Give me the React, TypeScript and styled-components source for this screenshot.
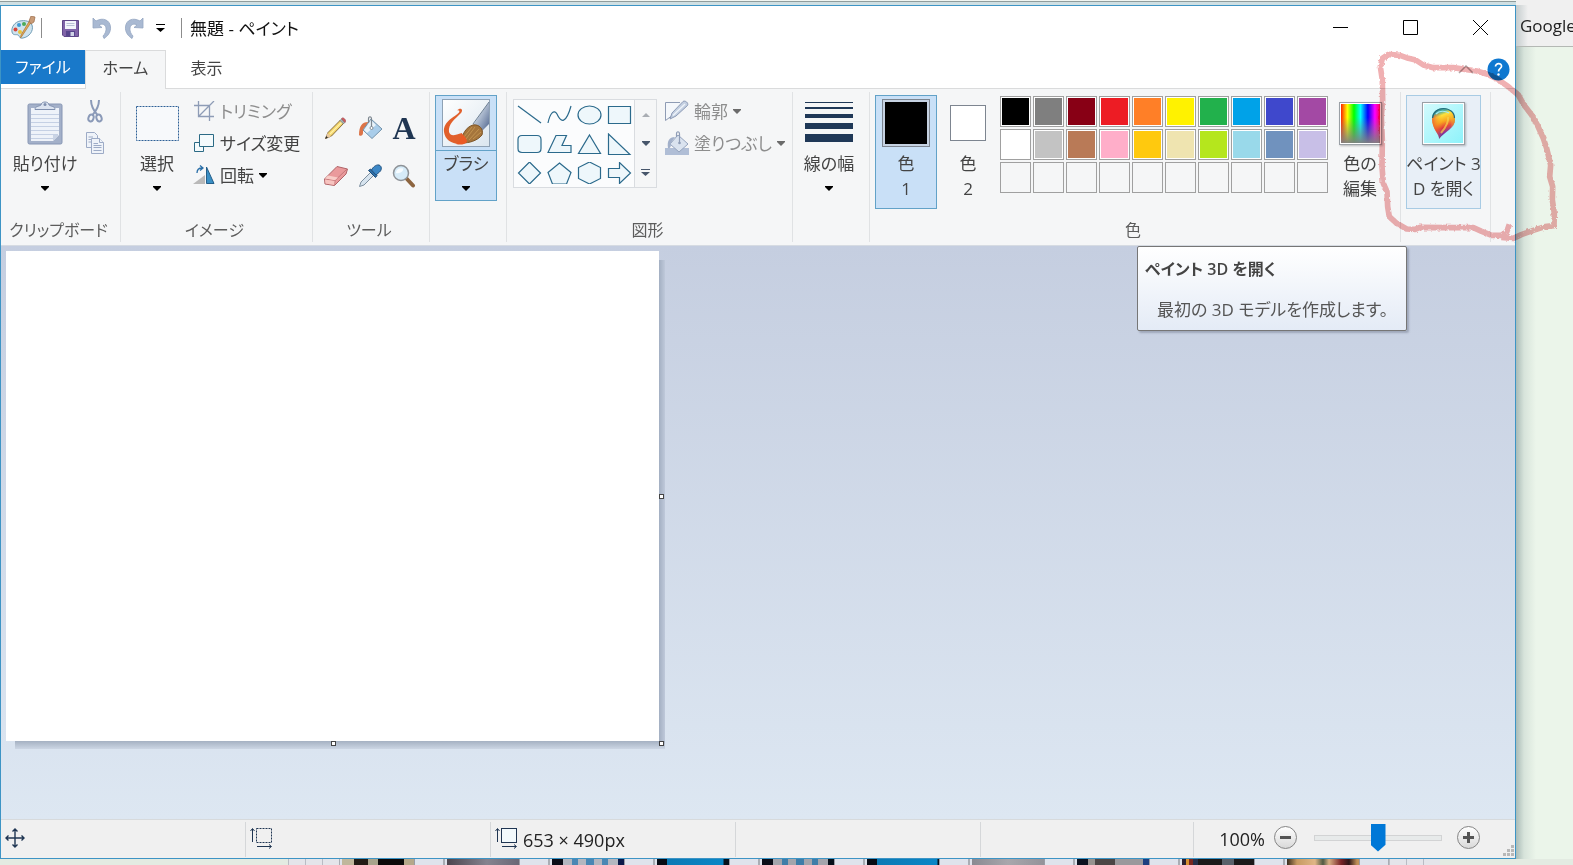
import React from "react";
import styled, { createGlobalStyle, css } from "styled-components";

const GlobalStyle = createGlobalStyle`
  * { box-sizing: border-box; }
  html, body, #root { height: 100%; }
  body {
    margin: 0;
    overflow: hidden;
    font-family: "Open Sans", "Noto Sans CJK JP", sans-serif;
    font-size: 17px;
    line-height: 25px;
    color: #444;
    font-feature-settings: "palt";
  }
  button, input { font: inherit; color: inherit; font-feature-settings: inherit; }
  svg { display: block; flex: none; }
`;

/* ---------- desktop and the browser behind the window ---------- */

const Desktop = styled.div`
  height: 100%;
  display: grid;
  grid-template-columns: minmax(0, 1fr) 57px;
  grid-template-rows: 5px minmax(0, 1fr) 6px;
  background: #ebf5ea;
`;

const TopEdge = styled.div`
  background: linear-gradient(#f1f5f1 0 1px, #8f9c9c 1px 2px, #cfdfe2 2px);
`;

const TopCorner = styled.div`
  background: #f0f0f0;
`;

const BrowserSide = styled.aside`
  background: linear-gradient(90deg, rgba(70, 100, 105, 0.4), rgba(70, 100, 105, 0.12) 8px, rgba(70, 100, 105, 0) 20px), #ebf5ea;
  overflow: hidden;
`;

const BookmarkBar = styled.div`
  height: 42px;
  padding: 8px 0 0 4px;
  background: linear-gradient(90deg, rgba(70, 100, 105, 0.25), rgba(70, 100, 105, 0) 12px), #f0f0f0;
  border-bottom: 1px solid #b4b8b4;
  color: #222;
  white-space: nowrap;
`;

const ThumbStrip = styled.div`
  grid-column: 1 / -1;
  display: flex;
  padding-left: 288px;
  background: #e3ebe2;
  overflow: hidden;
`;

const StripLead = styled.div`
  width: 51px;
  flex: none;
  background: repeating-linear-gradient(90deg, #b9bcc4 0 1px, #e4e5ea 1px 17px);
`;

const Thumb = styled.div<{ $bg: string }>`
  width: 105px;
  flex: none;
  border-left: 1px solid #a9adb4;
  border-right: 1px solid #a9adb4;
  background: #dfe3ec;
  &::before {
    content: "";
    display: block;
    height: 100%;
    width: 72px;
    margin-left: 2px;
    border-right: 1px solid #9a9ca4;
    background: ${(p) => p.$bg};
  }
`;

const thumbs = [
  "linear-gradient(90deg, #c0b79c 0 12px, #221c15 12px 26px, #a8a48c 26px 36px, #0c0a0a 36px 62px, #b5a88a 62px)",
  "linear-gradient(90deg, #4c454e, #85838f 40px, #6a6876)",
  "linear-gradient(90deg, #0b0d18 0 11px, #b3b7c0 11px 20px, #4a87b4 20px 26px, #b3b7c0 26px 34px, #4a87b4 34px 42px, #b3b7c0 42px 50px, #4a87b4 50px 56px, #b3b7c0 56px 66px, #0b1a4a 66px)",
  "linear-gradient(90deg, #070b14 0 10px, #0c79b4 10px, #0a86c6 66px, #05121c 67px)",
  "linear-gradient(90deg, #0b0d18 0 11px, #a3a5ac 11px 20px, #3f7da8 20px 26px, #a3a5ac 26px 34px, #3f7da8 34px 42px, #a3a5ac 42px 50px, #3f7da8 50px 56px, #a3a5ac 56px 66px, #05101a 66px)",
  "linear-gradient(90deg, #070b14 0 10px, #0c79b4 10px, #0a86c6 70px, #05121c 71px)",
  "linear-gradient(90deg, #8a8a92, #a8a7ac 36px, #94939a)",
  "linear-gradient(90deg, #0b1220 0 11px, #96938f 11px 18px, #4b4645 18px 38px, #9a999c 38px 66px, #1c3f80 66px)",
  "linear-gradient(90deg, #2c2030 0 4px, #d89030 4px 7px, #7a2720 7px 11px, #26304a 11px 16px, #1b1a1a 16px 40px, #59616a 40px 52px, #1b1a1a 52px)",
  "linear-gradient(90deg, #3a2c1e, #c79a62 10px, #e0b686 28px, #4f5a44 36px, #d7b184 42px, #7a2326 54px, #2c1518 62px, #c09058 70px)",
];

/* ---------- window frame ---------- */

const Window = styled.main`
  display: flex;
  flex-direction: column;
  min-width: 0;
  background: #fff;
  border: 1px solid #3d94c5;
`;

const TitleBar = styled.header`
  display: flex;
  align-items: center;
  height: 44px;
  flex: none;
  padding-left: 10px;
`;

const QuickAccess = styled.div`
  display: flex;
  align-items: center;
`;

const QuickButton = styled.button<{ $w: number }>`
  width: ${(p) => p.$w}px;
  height: 28px;
  display: grid;
  place-items: center;
  padding: 0;
  border: 0;
  background: none;
`;

const BarDivider = styled.span<{ $left: number; $right: number }>`
  width: 1px;
  height: 20px;
  margin: 0 ${(p) => p.$right}px 0 ${(p) => p.$left}px;
  background: #8c8c8c;
`;

const WindowTitle = styled.h1`
  flex: 1;
  margin: 0;
  font-size: 17px;
  font-weight: 400;
  color: #111;
`;

const CaptionButton = styled.button`
  width: 70px;
  height: 44px;
  padding: 0 0 2px;
  border: 0;
  background: none;
  display: grid;
  place-items: center;
`;

const TabBar = styled.nav`
  display: flex;
  align-items: flex-start;
  height: 39px;
  flex: none;
  border-bottom: 1px solid #dadbdc;
  font-size: 16px;
`;

const FileTab = styled.button`
  width: 84px;
  height: 34px;
  padding: 0;
  border: 0;
  background: #1979ca;
  color: #fff;
`;

const Tab = styled.button<{ $active?: boolean }>`
  width: 81px;
  height: 39px;
  padding: 0 0 3px;
  border: 1px solid transparent;
  border-bottom: 0;
  background: none;
  ${(p) =>
    p.$active &&
    css`
      background: #f5f6f7;
      border-color: #dadbdc;
    `}
`;

const TabTools = styled.div`
  display: flex;
  align-items: center;
  gap: 13px;
  height: 38px;
  margin-left: auto;
  padding-right: 5px;
`;

const PlainButton = styled.button`
  padding: 0;
  border: 0;
  background: none;
`;

/* ---------- ribbon ---------- */

const Ribbon = styled.section`
  display: flex;
  flex: none;
  height: 157px;
  padding: 3px 0;
  background: #f5f6f7;
  border-bottom: 1px solid #d6dbe2;
`;

const Group = styled.section<{ $w: number }>`
  width: ${(p) => p.$w}px;
  flex: none;
  display: flex;
  flex-direction: column;
  justify-content: space-between;
  padding-top: 3px;
  border-right: 1px solid #e0e2e4;
`;

const GroupBody = styled.div<{ $pad?: number; $gap?: number }>`
  display: flex;
  align-items: flex-start;
  gap: ${(p) => p.$gap ?? 0}px;
  padding-left: ${(p) => p.$pad ?? 5}px;
`;

const GroupLabel = styled.h2`
  margin: 0;
  padding-right: 4px;
  font-size: 16px;
  font-weight: 400;
  line-height: 24px;
  text-align: center;
  color: #5c5c5c;
`;

const BigButton = styled.button<{ $tone?: "on" | "hover"; $w?: number; $short?: boolean }>`
  width: ${(p) => p.$w ?? 62}px;
  height: ${(p) => (p.$short ? 106 : 114)}px;
  display: flex;
  flex-direction: column;
  align-items: center;
  padding: 3px 0 0;
  border: 1px solid transparent;
  background: none;
  white-space: nowrap;
  ${(p) => p.$tone === "on" && css`background: #c9e0f7; border-color: #62a2c8;`}
  ${(p) => p.$tone === "hover" && css`background: #e8eff7; border-color: #a8cbe4;`}
`;

const BigIcon = styled.span<{ $rule?: boolean }>`
  align-self: stretch;
  height: 52px;
  padding-bottom: ${(p) => (p.$rule ? 3 : 4)}px;
  display: grid;
  place-items: center;
  border-bottom: ${(p) => (p.$rule ? "1px solid #62a2c8" : "0")};
`;

const Line = styled.span`
  height: 25px;
  display: flex;
  align-items: center;
`;

const SmallColumn = styled.div`
  display: flex;
  flex-direction: column;
`;

const SmallButton = styled.button<{ $off?: boolean }>`
  display: flex;
  align-items: center;
  gap: 5px;
  height: 32px;
  padding: 0;
  border: 0;
  background: none;
  white-space: nowrap;
  color: ${(p) => (p.$off ? "#8d8d8d" : "#444")};
`;

const ToolGrid = styled.div`
  display: grid;
  grid-template-columns: repeat(3, 34px);
  grid-auto-rows: 48px;
  padding-top: 9px;
`;

const ToolButton = styled.button`
  display: grid;
  place-items: center;
  padding: 0;
  border: 0;
  background: none;
`;

const LetterA = styled.span`
  font: bold 32px/34px "Liberation Serif", serif;
  color: #1f3552;
`;

const Gallery = styled.div`
  display: flex;
  margin-top: 4px;
  margin-right: 8px;
  border: 1px solid #d9dce0;
  background: #fbfcfd;
`;

const ShapeGrid = styled.div`
  display: grid;
  grid-template-columns: repeat(4, 30px);
  grid-auto-rows: 29px;
`;

const GalleryScroll = styled.div`
  display: grid;
  grid-template-rows: repeat(3, 29px);
  width: 22px;
  border-left: 1px solid #d9dce0;
  background: #f5f6f7;
`;

const Palette = styled.div`
  display: grid;
  grid-template-columns: repeat(10, 31px);
  gap: 2px;
  margin: 1px 1px 0;
`;

const Swatch = styled.button<{ $c?: string }>`
  height: 31px;
  padding: 1px;
  border: 1px solid #a0a0a0;
  background: ${(p) => (p.$c ? `linear-gradient(${p.$c}, ${p.$c}) content-box, #fff` : "none")};
`;

const ColorChip = styled.span<{ $size: number; $c: string; $mat: string }>`
  width: ${(p) => p.$size}px;
  height: ${(p) => p.$size}px;
  padding: 2px;
  border: 1px solid #7d8590;
  background: ${(p) => `linear-gradient(${p.$c}, ${p.$c}) content-box, ${p.$mat}`};
`;

const FramedChip = styled.span<{ $bg: string }>`
  width: 43px;
  height: 43px;
  display: grid;
  place-items: center;
  border: 1px solid #9aa0a6;
  box-shadow: inset 0 0 0 1px #fff, 1px 1px 2px rgba(0, 0, 0, 0.25);
  background: ${(p) => p.$bg};
`;

/* ---------- work area ---------- */

const Workspace = styled.section`
  position: relative;
  flex: 1;
  min-height: 0;
  padding: 5px;
  background: linear-gradient(#c5cee0, #dde7f2);
  overflow: hidden;
`;

const Paper = styled.div`
  position: relative;
  width: 653px;
  height: 490px;
  background: #fff;
  &::before, &::after {
    content: "";
    position: absolute;
  }
  &::before {
    left: 9px;
    right: -6px;
    top: 100%;
    height: 8px;
    background: linear-gradient(#a5b1c2, #ccd6e4);
  }
  &::after {
    left: 100%;
    top: 9px;
    bottom: 0;
    width: 6px;
    background: linear-gradient(90deg, #a3afc2, #bfc9da);
  }
`;

const Handle = styled.i<{ $x: string; $y: string }>`
  position: absolute;
  z-index: 1;
  left: ${(p) => p.$x};
  top: ${(p) => p.$y};
  width: 5px;
  height: 5px;
  border: 1px solid #444;
  background: #fff;
`;

const Tooltip = styled.div`
  position: absolute;
  top: 0;
  right: 108px;
  width: 270px;
  height: 85px;
  padding: 10px 7px;
  border: 1px solid #767676;
  border-radius: 2px;
  background: linear-gradient(#fff, #e4ebf6);
  box-shadow: 2px 2px 2px rgba(80, 90, 110, 0.35);
  white-space: nowrap;
  color: #555;
`;

const TipTitle = styled.strong`
  display: block;
  font-size: 16px;
  font-weight: 600;
  color: #444;
  margin-bottom: 15px;
`;

const TipText = styled.p`
  margin: 0;
  padding-left: 12px;
`;

/* ---------- status bar ---------- */

const StatusBar = styled.footer`
  display: flex;
  flex: none;
  height: 39px;
  padding: 2px 0 1px;
  border-top: 1px solid #d7dadc;
  background: #f0f0f0;
  color: #222;
  font-size: 18px;
`;

const StatusCell = styled.div<{ $w?: number }>`
  width: ${(p) => p.$w ?? 245}px;
  display: flex;
  align-items: center;
  gap: 5px;
  padding: 0 0 3px 4px;
  border-right: 1px solid #d5d7d9;
`;

const StatusText = styled.span`
  padding-top: 4px;
`;

const ZoomArea = styled.div`
  flex: 1;
  display: flex;
  align-items: center;
  justify-content: flex-end;
`;

const ZoomControls = styled.div`
  display: flex;
  align-items: center;
  padding-bottom: 4px;
`;

const ZoomValue = styled.output`
  margin-right: 9px;
  padding-top: 4px;
`;

const RoundButton = styled.button`
  width: 23px;
  height: 23px;
  display: grid;
  place-items: center;
  padding: 0;
  border: 1px solid #858585;
  border-radius: 50%;
  background: linear-gradient(#fff, #d9d9d9);
`;

const ZoomSlider = styled.input`
  width: 128px;
  height: 28px;
  margin: 0 15px 0 17px;
  appearance: none;
  background: none;
  &::-webkit-slider-runnable-track {
    height: 6px;
    border: 1px solid #d2d3d4;
    background: #e7eaea;
  }
  &::-webkit-slider-thumb {
    appearance: none;
    width: 15px;
    height: 28px;
    margin-top: -12px;
    background: #0078d7;
    clip-path: polygon(0 0, 100% 0, 100% 76%, 50% 100%, 0 76%);
  }
`;

const Grip = styled.span`
  align-self: flex-end;
  margin: 0 1px 1px 23px;
`;

const Scribble = styled.svg`
  position: absolute;
  top: 0;
  right: 0;
  pointer-events: none;
  mix-blend-mode: multiply;
`;

/* ---------- drawings ---------- */

const Arrow = ({ c = "#000" }: { c?: string }) => (
  <svg width="8" height="5" viewBox="0 0 8 5" aria-hidden="true">
    <path d="M0 0H8V1L4 5L0 1Z" fill={c} />
  </svg>
);

const AppIcon = () => (
  <svg width="25" height="24" viewBox="0 0 25 24">
    <path d="M9 5C4 6 0 11 1 16C2 20 5 18 7 19C9 20 8 23 12 22C18 21 23 15 21 9C19 5 14 4 9 5Z" fill="#cfe3ee" stroke="#6f9cb5" />
    <circle cx="4.500" cy="13.500" r="2" fill="#d9453a" />
    <circle cx="8" cy="9" r="2" fill="#3f9bd6" />
    <circle cx="13" cy="8" r="2" fill="#4cab57" />
    <circle cx="9" cy="16" r="2" fill="#e8c33c" />
    <path d="M21 5L11 20L9.500 22L10 19L19 4Z" fill="#e3a85a" stroke="#a8742f" strokeWidth=".7" />
    <path d="M18 5L20 0L24 1L23 6L20 8Z" fill="#c99c78" stroke="#9a6b49" strokeWidth=".7" />
  </svg>
);

const SaveIcon = () => (
  <svg width="17" height="17" viewBox="0 0 17 17">
    <path d="M.5.5H16.500V16.500H2L.5 15Z" fill="#8064a8" stroke="#604888" />
    <path d="M3 1H14V9H3Z" fill="#f3f5fa" />
    <path d="M4.500 3.500H12.500M4.500 5.500H12.500" stroke="#b8c0d4" />
    <path d="M4 11H13V16.500H4Z" fill="#58468c" />
    <path d="M8.500 12H12V16H8.500Z" fill="#cfd3e6" />
  </svg>
);

const UndoIcon = ({ flip = false }: { flip?: boolean }) => (
  <svg width="20" height="22" viewBox="0 0 20 22">
    <g transform={flip ? "translate(20 0) scale(-1 1)" : undefined}>
      <path d="M1 1L4 4C11 0 18 3 18.500 10C19 15 16 19 12 21.500L11 19C15 15 15 9 11.500 7.500C10 7 8.500 7 7 8L10 10.500L1 11Z" fill="#a9b9d2" stroke="#94a6c2" strokeWidth=".8" />
    </g>
  </svg>
);

const PasteIcon = () => (
  <svg width="36" height="44" viewBox="0 0 36 44">
    <rect x="1" y="3" width="34" height="40" rx="1.500" fill="#a3b0c9" stroke="#8796b4" />
    <path d="M4 7H32V34L26 40H4Z" fill="#eef2f9" />
    <path d="M4 13.500H32M4 17.500H32M4 21.500H32M4 25.500H32M4 29.500H32M4 33.500H31M4 37.500H28" stroke="#c5d0e4" />
    <path d="M32 34L26 40V34Z" fill="#c9d3e5" />
    <path d="M8 8.500C8 5 12 5.500 14 4C14 0 22 0 22 4C24 5.500 28 5 28 8.500Z" fill="#dbe3f0" stroke="#7f8fae" />
    <circle cx="18" cy="3.500" r="1.500" fill="#7f8fae" />
  </svg>
);

const CutIcon = () => (
  <svg width="22" height="24" viewBox="0 0 22 24" fill="none" stroke="#8b9ab8">
    <path d="M7 1C7 6 9 11 13.500 16M15 1C15 6 13 11 8.500 16" strokeWidth="2" />
    <ellipse cx="7" cy="19" rx="2.500" ry="3.500" strokeWidth="2" transform="rotate(20 7 19)" />
    <ellipse cx="15" cy="19" rx="2.500" ry="3.500" strokeWidth="2" transform="rotate(-20 15 19)" />
  </svg>
);

const CopyIcon = () => (
  <svg width="22" height="22" viewBox="0 0 22 22" fill="#eff3f9" stroke="#9dabc6">
    <path d="M2.500.5H10.500L13.500 3.500V15.500H2.500Z" />
    <path d="M4.500 5H9M4.500 7.500H9M4.500 10H9" />
    <path d="M7.500 6.500H15.500L19.500 10.500V21.500H7.500Z" />
    <path d="M15.500 6.500V10.500H19.500M9.500 11.500H14M9.500 13.500H17.500M9.500 15.500H17.500M9.500 18.500H17.500" />
  </svg>
);

const SelectIcon = () => (
  <svg width="43" height="35" viewBox="0 0 43 35">
    <rect x=".5" y=".5" width="42" height="34" fill="#f7f9fb" stroke="#2e6096" strokeDasharray="2 1" />
  </svg>
);

const CropIcon = () => (
  <svg width="22" height="20" viewBox="0 0 22 20" fill="none" stroke="#8e9cb6">
    <path d="M5.500 0V15.500H21M1 4.500H16.500V20M6 15L21 0" strokeWidth="1.300" />
  </svg>
);

const ResizeIcon = () => (
  <svg width="22" height="20" viewBox="0 0 22 20" fill="#f4fafc" stroke="#2b6a85">
    <path d="M1.500 9.500H10.500V18.500H1.500Z" />
    <path d="M6.500 1.500H20.500V13.500H6.500Z" />
  </svg>
);

const RotateIcon = () => (
  <svg width="22" height="20" viewBox="0 0 22 20">
    <path d="M0 19L12 10V19Z" fill="#b9b9b9" />
    <path d="M13.500 2V18.500H21Z" fill="#3a8fc4" stroke="#235e8a" />
    <path d="M4 8C4 4 6 3 9 3M7 .5L10 3L7 5.500" fill="none" stroke="#2a6fa8" strokeWidth="1.300" />
  </svg>
);

const PencilIcon = () => (
  <svg width="24" height="24" viewBox="0 0 24 24">
    <path d="M1.500 22.500L4 16.500L16.500 4L19.500 7.500L7.500 20Z" fill="#f3d56b" stroke="#7a6034" strokeWidth=".9" />
    <path d="M6 18L18 6" stroke="#fff1a8" strokeWidth="1.300" />
    <path d="M16 4.500L17.500 3L20.500 6.500L19.500 8Z" fill="#a9b6b9" stroke="#6b6f6f" strokeWidth=".6" />
    <path d="M17.500 2.500C19 .5 23 4 21 6.500Z" fill="#d9575c" stroke="#8c3d3f" strokeWidth=".6" />
    <path d="M1.500 22.500L3.500 17L7 20.500Z" fill="#e9c9a0" />
    <path d="M1.200 22.800L2.300 20L4 21.700Z" fill="#2c2a28" />
  </svg>
);

const BucketIcon = () => (
  <svg width="25" height="24" viewBox="0 0 25 24">
    <path d="M10 6C4 6 1 10 1 19C3 21 5 19 5 17C5 13 6 11 9 11Z" fill="#dc7448" />
    <path d="M13 3L24 13L14 22.500L5 14Z" fill="#a9cdea" stroke="#7393ab" />
    <path d="M13 4L18 9L9 17L6 14Z" fill="#e9f3fa" />
    <path d="M13.500 12V3C13.500 0 10.500 0 10.500 3V7" fill="none" stroke="#7d8790" strokeWidth="1.200" />
    <circle cx="13.500" cy="12" r="1.500" fill="#fff" stroke="#6e7880" strokeWidth=".8" />
  </svg>
);

const EraserIcon = () => (
  <svg width="26" height="22" viewBox="0 0 26 22">
    <path d="M1.500 14L14 1.500L24.500 4L23 9L11.500 20.500L2 19Z" fill="#ea9a9c" stroke="#b06468" />
    <path d="M2 14L12 15.500L24 4M12 15.500L11.500 20" fill="none" stroke="#c4777a" />
    <path d="M2 14.500L11.500 16L11.200 20L2.500 18.500Z" fill="#f7c4c0" />
    <path d="M2 13.500L5 10.500L15 12.500L12 15.200Z" fill="#f8cdc8" />
  </svg>
);

const DropperIcon = () => (
  <svg width="24" height="24" viewBox="0 0 24 24">
    <path d="M1.500 22.500L3 18L13 8L16 11L6 21Z" fill="#d6e3ee" stroke="#7e90a0" />
    <path d="M10.500 6.500L12.500 5L19 11.500L17.500 13.500Z" fill="#2d6fa8" stroke="#1f4c78" />
    <path d="M13.500 6C15 3 18 .5 21 1C24 2 24 6 21.500 8L18 11Z" fill="#3c87c6" stroke="#22527f" />
  </svg>
);

const LensIcon = () => (
  <svg width="24" height="24" viewBox="0 0 24 24">
    <path d="M14.500 14.500L21 21.500" stroke="#8d6540" strokeWidth="4" strokeLinecap="round" />
    <circle cx="9" cy="9" r="7.500" fill="#d6ebf8" stroke="#8e9398" strokeWidth="1.500" />
    <path d="M4 9C4 5 8 3.500 11 4.500C12 7 8 10 4 9Z" fill="#f7fcff" />
  </svg>
);

const BrushIcon = () => (
  <svg width="48" height="48" viewBox="0 0 48 48">
    <defs>
      <linearGradient id="brushBg" x1="0" y1="0" x2="1" y2="1">
        <stop offset="0" stopColor="#fff" />
        <stop offset="1" stopColor="#dbe6ef" />
      </linearGradient>
      <linearGradient id="brushMetal" x1="0" y1="0" x2="1" y2="1">
        <stop offset="0" stopColor="#f4f8fc" />
        <stop offset=".5" stopColor="#a9b7cc" />
        <stop offset="1" stopColor="#4c628c" />
      </linearGradient>
    </defs>
    <rect x=".5" y=".5" width="47" height="47" fill="url(#brushBg)" stroke="#8fa2b5" />
    <path d="M15 11.500C18 8 22 10 19 14C13 20 6 25 7 33C9 38 13 36 20 34L23 44C13 47 3 42 2 33C1 22 13 18 17 13.500C18 12 17 11 15 11.500Z" fill="#e1602c" />
    <path d="M31 26L47 3V25L39 33Z" fill="url(#brushMetal)" />
    <path d="M20 44C19 36 24 28 31 26C37 25 42 30 40 36C35 42 27 44 20 44Z" fill="#a5753c" stroke="#7d5527" />
    <path d="M24 40L33 28M27 41L37 30M22 38L30 28M31 40L39 33" stroke="#c99a55" strokeWidth=".8" />
    <path d="M14 45C17 43 19 40 20 35C23 37 25 40 25 43C22 46 18 46 14 45Z" fill="#ea5a25" />
    <path d="M31 25L47 3" stroke="#6c7f93" />
  </svg>
);

const shapePaths = [
  "M1 2L24 19",
  "M1 19C3 9 7 5 10 10C14 19 19 20 24 2",
  "M24 11A11.500 9 0 1 1 1 11A11.500 9 0 1 1 24 11Z",
  "M1.500 2.500H23.500V19.500H1.500Z",
  "M5 2.500H20Q24 2.500 24 6.500V15.500Q24 19.500 20 19.500H5Q1 19.500 1 15.500V6.500Q1 2.500 5 2.500Z",
  "M1 19.500L9 2.500H19.500L15 12.500H24V19.500Z",
  "M12.500 2L23.500 20.500H1.500Z",
  "M1.500 1V21.500H23Z",
  "M12.500 0L23.500 11L12.500 22L1.500 11Z",
  "M12.500 1L24 10.500L19.500 22H5.500L1 10.500Z",
  "M12.500 0L23.500 5.500V16.500L12.500 22L1.500 16.500V5.500Z",
  "M1.500 6.500H12.500V.5L23.500 11L12.500 21.500V15.500H1.500Z",
];

const shapeNames = ["直線", "曲線", "楕円", "四角形", "角丸四角形", "多角形", "三角形", "直角三角形", "ひし形", "五角形", "六角形", "右矢印"];

const OutlineIcon = () => (
  <svg width="24" height="22" viewBox="0 0 24 22">
    <path d="M15 2.500H.5V20.500L20 6" fill="#f4f7fb" stroke="#8e9bb4" />
    <path d="M5 19L7 13L18 1.500C20 0 24 3 22.500 5.500L11 16Z" fill="#c3cfe1" stroke="#8d9bb6" />
    <path d="M8 15.500L20 4" stroke="#eef3f9" strokeWidth="1.500" />
  </svg>
);

const FillIcon = () => (
  <svg width="24" height="24" viewBox="0 0 24 24">
    <path d="M0 17H24V24H0Z" fill="#b0bed6" />
    <path d="M13 4L23 13L14 21L5 13Z" fill="#dae3ef" stroke="#94a3bd" />
    <path d="M10 6C4 6 2 10 3 17C6 18 6 14 6 12Z" fill="#a2b0ca" />
    <path d="M14.500 12V3C14.500 0 11.500 0 11.500 3V6" fill="none" stroke="#8f9db6" strokeWidth="1.200" />
    <circle cx="14.500" cy="12" r="1.300" fill="#8f9db6" />
  </svg>
);

const LinesIcon = () => (
  <svg width="48" height="42" viewBox="0 0 48 42" fill="#1f3857">
    <path d="M0 0H48V1H0ZM0 5H48V7H0ZM0 12H48V16H0ZM0 21H48V27H0ZM0 32H48V40H0Z" />
  </svg>
);

const DropIcon = () => (
  <svg width="25" height="33" viewBox="0 0 25 33">
    <defs>
      <linearGradient id="drop" x1=".2" y1="0" x2=".5" y2="1">
        <stop offset="0" stopColor="#2a7f90" />
        <stop offset=".16" stopColor="#4fae9a" />
        <stop offset=".28" stopColor="#ffe23a" />
        <stop offset=".48" stopColor="#f9a51f" />
        <stop offset=".66" stopColor="#e43a3a" />
        <stop offset=".82" stopColor="#8a2f9c" />
        <stop offset="1" stopColor="#35308c" />
      </linearGradient>
      <linearGradient id="dropSide" x1="0" y1="0" x2="1" y2="0">
        <stop offset="0" stopColor="#e8452f" stopOpacity=".75" />
        <stop offset=".45" stopColor="#f7b023" stopOpacity="0" />
        <stop offset=".8" stopColor="#ffe94a" stopOpacity=".1" />
        <stop offset="1" stopColor="#d9a01c" stopOpacity=".8" />
      </linearGradient>
    </defs>
    <path d="M8 32C9 28 1 22 1 12C1 5 6 1 12.500 1C19 1 24 6 24 12C24 22 14 24 8 32Z" fill="url(#drop)" />
    <path d="M8 32C9 28 1 22 1 12C3 6 8 6 12.500 6C18 6 22 8 24 12C24 22 14 24 8 32Z" fill="url(#dropSide)" />
    <path d="M1.500 11C2 5 7 1.500 12.500 1.500C18 1.500 23.500 5 23.500 11" stroke="#236b7c" strokeWidth="1.200" fill="none" />
    <path d="M5 7C8 3.500 14 3.500 18 6" stroke="#a5ecf5" strokeWidth="1.200" fill="none" />
    <path d="M17 10C18 15 15 20 10 26" stroke="#f7d54a" strokeWidth="2" fill="none" opacity=".7" />
  </svg>
);

const MoveIcon = () => (
  <svg width="20" height="20" viewBox="0 0 20 20" fill="none" stroke="#1f3552">
    <path d="M10 1V19M1 10H19M7.500 3.500L10 1L12.500 3.500M7.500 16.500L10 19L12.500 16.500M3.500 7.500L1 10L3.500 12.500M16.500 7.500L19 10L16.500 12.500" strokeWidth="1.400" />
  </svg>
);

const SizeIcon = ({ dashed = false }: { dashed?: boolean }) => (
  <svg width="23" height="22" viewBox="0 0 23 22" fill="none" stroke="#1f3552">
    <rect x="6.500" y="1.500" width="15" height="14" fill={dashed ? "none" : "#f2f9fc"} strokeDasharray={dashed ? "2 1" : undefined} />
    <path d="M2.500 15V2M.5 4L2.500 1.500L4.500 4M7 19.500H21M19 17.500L21.500 19.500L19 21.500" />
  </svg>
);

const scribblePath =
  "M604 712L640 715L664 704L700 691L735 680L762 677L763 640L757 600L758 560L749 530L752 495L740 445L730 415L712 375L695 345L672 315L655 285L625 260L590 236L560 222L530 213L495 208L460 203L400 203L370 195L347 180L325 175L300 166L265 163L247 175L241 200L247 240L248 300L244 350L247 420L246 500L250 550L261 575L263 620L268 650L290 670L320 687L345 688L360 682L440 683L520 683L545 694L575 706L603 706L620 696L628 673";

const swatchRows = [
  ["#000000", "#7f7f7f", "#880015", "#ed1c24", "#ff7f27", "#fff200", "#22b14c", "#00a2e8", "#3f48cc", "#a349a4"],
  ["#ffffff", "#c3c3c3", "#b97a57", "#ffaec9", "#ffc90e", "#efe4b0", "#b5e61d", "#99d9ea", "#7092be", "#c8bfe7"],
];

export default function App() {
  return (
    <>
      <GlobalStyle />
      <Desktop>
        <TopEdge />
        <TopCorner />

        <Window>
          <TitleBar>
            <AppIcon />
            <BarDivider $left={5} $right={12} />
            <QuickAccess>
              <QuickButton $w={32} aria-label="保存"><SaveIcon /></QuickButton>
              <QuickButton $w={32} aria-label="元に戻す"><UndoIcon /></QuickButton>
              <QuickButton $w={32} aria-label="やり直し"><UndoIcon flip /></QuickButton>
              <QuickButton $w={20} aria-label="クイック アクセス ツール バーのカスタマイズ">
                <svg width="9" height="8" viewBox="0 0 9 8"><path d="M0 0H9V1H0ZM0 4H9L4.500 8Z" /></svg>
              </QuickButton>
            </QuickAccess>
            <BarDivider $left={11} $right={8} />
            <WindowTitle>無題 - ペイント</WindowTitle>
            <CaptionButton aria-label="最小化">
              <svg width="15" height="15" viewBox="0 0 15 15" stroke="#000"><path d="M0 7.500H15" /></svg>
            </CaptionButton>
            <CaptionButton aria-label="最大化">
              <svg width="15" height="15" viewBox="0 0 15 15" fill="none" stroke="#000"><path d="M.5.5H14.500V14.500H.5Z" /></svg>
            </CaptionButton>
            <CaptionButton aria-label="閉じる">
              <svg width="15" height="15" viewBox="0 0 15 15" stroke="#000"><path d="M0 0L15 15M15 0L0 15" /></svg>
            </CaptionButton>
          </TitleBar>

          <TabBar>
            <FileTab>ファイル</FileTab>
            <Tab $active>ホーム</Tab>
            <Tab>表示</Tab>
            <TabTools>
              <PlainButton aria-label="リボンの最小化">
                <svg width="16" height="9" viewBox="0 0 16 9" fill="none" stroke="#b0a8a8" strokeWidth="1.500"><path d="M1 8L8 1L15 8" /></svg>
              </PlainButton>
              <PlainButton aria-label="ヘルプ">
                <svg width="23" height="23" viewBox="0 0 23 23">
                  <circle cx="11.500" cy="11.500" r="11" fill="#0f78d0" />
                  <path d="M8.500 8.500C8.500 4.500 15 5 14.500 8.500C14.300 10.500 11.500 10.500 11.500 13.500" fill="none" stroke="#fff" strokeWidth="1.700" />
                  <circle cx="11.500" cy="16.500" r="1.200" fill="#fff" />
                </svg>
              </PlainButton>
            </TabTools>
          </TabBar>

          <Ribbon>
            <Group $w={120}>
              <GroupBody $pad={13} $gap={8}>
                <BigButton>
                  <BigIcon><PasteIcon /></BigIcon>
                  <Line>貼り付け</Line>
                  <Line><Arrow /></Line>
                </BigButton>
                <SmallColumn>
                  <SmallButton aria-label="切り取り"><CutIcon /></SmallButton>
                  <SmallButton aria-label="コピー"><CopyIcon /></SmallButton>
                </SmallColumn>
              </GroupBody>
              <GroupLabel>クリップボード</GroupLabel>
            </Group>

            <Group $w={192}>
              <GroupBody $gap={5}>
                <BigButton>
                  <BigIcon><SelectIcon /></BigIcon>
                  <Line>選択</Line>
                  <Line><Arrow /></Line>
                </BigButton>
                <SmallColumn>
                  <SmallButton $off><CropIcon />トリミング</SmallButton>
                  <SmallButton><ResizeIcon />サイズ変更</SmallButton>
                  <SmallButton><RotateIcon />回転<Arrow /></SmallButton>
                </SmallColumn>
              </GroupBody>
              <GroupLabel>イメージ</GroupLabel>
            </Group>

            <Group $w={117}>
              <GroupBody $pad={6}>
                <ToolGrid>
                  <ToolButton aria-label="鉛筆"><PencilIcon /></ToolButton>
                  <ToolButton aria-label="塗りつぶし"><BucketIcon /></ToolButton>
                  <ToolButton aria-label="テキスト"><LetterA>A</LetterA></ToolButton>
                  <ToolButton aria-label="消しゴム"><EraserIcon /></ToolButton>
                  <ToolButton aria-label="色の選択"><DropperIcon /></ToolButton>
                  <ToolButton aria-label="拡大鏡"><LensIcon /></ToolButton>
                </ToolGrid>
              </GroupBody>
              <GroupLabel>ツール</GroupLabel>
            </Group>

            <Group $w={77}>
              <GroupBody>
                <BigButton $tone="on" $short>
                  <BigIcon $rule><BrushIcon /></BigIcon>
                  <Line>ブラシ</Line>
                  <Line><Arrow /></Line>
                </BigButton>
              </GroupBody>
            </Group>

            <Group $w={286}>
              <GroupBody $pad={6}>
                <Gallery>
                  <ShapeGrid>
                    {shapePaths.map((d, i) => (
                      <ToolButton key={d} aria-label={shapeNames[i]}>
                        <svg width="25" height="22" viewBox="0 0 25 22">
                          <path d={d} fill={i < 2 ? "none" : "#eef7fb"} stroke="#2b6a8c" strokeWidth="1.200" />
                        </svg>
                      </ToolButton>
                    ))}
                  </ShapeGrid>
                  <GalleryScroll>
                    <ToolButton aria-label="上へ">
                      <svg width="8" height="4" viewBox="0 0 8 4"><path d="M0 4L4 0L8 4Z" fill="#a9adb3" /></svg>
                    </ToolButton>
                    <ToolButton aria-label="下へ"><Arrow c="#47566b" /></ToolButton>
                    <ToolButton aria-label="その他">
                      <svg width="9" height="7" viewBox="0 0 9 7" fill="#47566b"><path d="M0 0H9V1H0ZM0 3H9L4.500 7Z" /></svg>
                    </ToolButton>
                  </GalleryScroll>
                </Gallery>
                <SmallColumn>
                  <SmallButton $off><OutlineIcon />輪郭<Arrow c="#6b6b6b" /></SmallButton>
                  <SmallButton $off><FillIcon />塗りつぶし<Arrow c="#6b6b6b" /></SmallButton>
                </SmallColumn>
              </GroupBody>
              <GroupLabel>図形</GroupLabel>
            </Group>

            <Group $w={77}>
              <GroupBody>
                <BigButton>
                  <BigIcon><LinesIcon /></BigIcon>
                  <Line>線の幅</Line>
                  <Line><Arrow /></Line>
                </BigButton>
              </GroupBody>
            </Group>

            <Group $w={531}>
              <GroupBody>
                <BigButton $tone="on">
                  <BigIcon><ColorChip $size={48} $c="#000" $mat="#c6d2e2" /></BigIcon>
                  <Line>色</Line>
                  <Line>1</Line>
                </BigButton>
                <BigButton>
                  <BigIcon><ColorChip $size={36} $c="#fff" $mat="#fff" /></BigIcon>
                  <Line>色</Line>
                  <Line>2</Line>
                </BigButton>
                <Palette>
                  {swatchRows.flat().map((c) => (
                    <Swatch key={c} $c={c} aria-label={c} />
                  ))}
                  {Array.from({ length: 10 }, (_, i) => (
                    <Swatch key={i} aria-label="ユーザー設定の色" />
                  ))}
                </Palette>
                <BigButton>
                  <BigIcon>
                    <FramedChip $bg="linear-gradient(rgba(128,128,128,0) 35%, #808080), linear-gradient(90deg, #f00, #ff0 18%, #0f0 34%, #0ff 50%, #00f 68%, #f0f 85%, #f03)" />
                  </BigIcon>
                  <Line>色の</Line>
                  <Line>編集</Line>
                </BigButton>
              </GroupBody>
              <GroupLabel>色</GroupLabel>
            </Group>

            <Group $w={90}>
              <GroupBody>
                <BigButton $tone="hover" $w={75}>
                  <BigIcon>
                    <FramedChip $bg="linear-gradient(135deg, #d4fbfd, #8cf2fa)"><DropIcon /></FramedChip>
                  </BigIcon>
                  <Line>ペイント 3</Line>
                  <Line>D を開く</Line>
                </BigButton>
              </GroupBody>
            </Group>
          </Ribbon>

          <Workspace>
            <Paper>
              <Handle $x="100%" $y="calc(50% - 2px)" />
              <Handle $x="calc(50% - 2px)" $y="100%" />
              <Handle $x="100%" $y="100%" />
            </Paper>
            <Tooltip role="tooltip">
              <TipTitle>ペイント 3D を開く</TipTitle>
              <TipText>最初の 3D モデルを作成します。</TipText>
            </Tooltip>
          </Workspace>

          <StatusBar>
            <StatusCell><MoveIcon /></StatusCell>
            <StatusCell><SizeIcon dashed /></StatusCell>
            <StatusCell><SizeIcon /><StatusText>653 × 490px</StatusText></StatusCell>
            <StatusCell />
            <StatusCell $w={213} />
            <ZoomArea>
              <ZoomControls>
                <ZoomValue>100%</ZoomValue>
                <RoundButton aria-label="縮小">
                  <svg width="11" height="11" viewBox="0 0 11 11"><path d="M0 4H11V7H0Z" fill="#555" /></svg>
                </RoundButton>
                <ZoomSlider type="range" min={0} max={100} defaultValue={50} aria-label="ズーム" />
                <RoundButton aria-label="拡大">
                  <svg width="11" height="11" viewBox="0 0 11 11"><path d="M0 4H4V0H7V4H11V7H7V11H4V7H0Z" fill="#555" /></svg>
                </RoundButton>
              </ZoomControls>
              <Grip>
                <svg width="11" height="11" viewBox="0 0 11 11" fill="#b8b8b8">
                  <path d="M8 0H11V3H8ZM8 4H11V7H8ZM8 8H11V11H8ZM4 4H7V7H4ZM4 8H7V11H4ZM0 8H3V11H0Z" />
                </svg>
              </Grip>
            </ZoomArea>
          </StatusBar>
        </Window>

        <BrowserSide>
          <BookmarkBar>Google</BookmarkBar>
        </BrowserSide>

        <ThumbStrip>
          <StripLead />
          {thumbs.map((bg) => (
            <Thumb key={bg} $bg={bg} />
          ))}
          <StripLead />
        </ThumbStrip>
      </Desktop>

      <Scribble width="273" height="250" viewBox="0 0 819 750" aria-hidden="true">
        <filter id="crayon" x="-5%" y="-5%" width="110%" height="110%">
          <feTurbulence type="fractalNoise" baseFrequency="0.12" numOctaves="2" seed="4" />
          <feDisplacementMap in="SourceGraphic" scale="10" />
        </filter>
        <path d={scribblePath} fill="none" stroke="#f0b0b2" strokeWidth="17" strokeLinejoin="round" filter="url(#crayon)" />
      </Scribble>
    </>
  );
}
